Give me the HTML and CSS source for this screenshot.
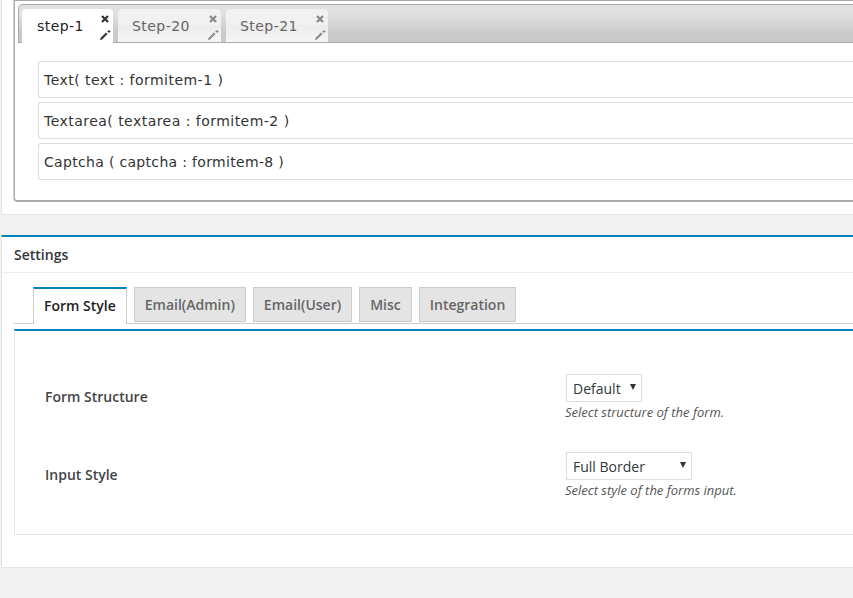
FILE: index.html
```html
<!DOCTYPE html>
<html lang="en">
<head>
<meta charset="utf-8">
<title>Form settings</title>
<link rel="stylesheet" href="styles.css">
</head>
<body>
<div class="page">
  <section class="card steps-card">
    <div class="widget">
      <div class="steps-bar">
        <div class="step active"><span class="step-label">step-1</span>
          <svg class="ico ico-x" viewBox="0 0 8 8"><path d="M1 1 7 7M7 1 1 7"/></svg>
          <svg class="ico ico-pen" viewBox="0 0 12 12"><path class="pen" d="M1 11 1.5 9 7 3.5 8.5 5 3 10.5Z"/><path class="pen" d="M9.5 1h1v1h1v1h-1v1h-1V3h-1V2h1z"/></svg>
        </div>
        <div class="step"><span class="step-label">Step-20</span>
          <svg class="ico ico-x" viewBox="0 0 8 8"><path d="M1 1 7 7M7 1 1 7"/></svg>
          <svg class="ico ico-pen" viewBox="0 0 12 12"><path class="pen" d="M1 11 1.5 9 7 3.5 8.5 5 3 10.5Z"/><path class="pen" d="M9.5 1h1v1h1v1h-1v1h-1V3h-1V2h1z"/></svg>
        </div>
        <div class="step"><span class="step-label">Step-21</span>
          <svg class="ico ico-x" viewBox="0 0 8 8"><path d="M1 1 7 7M7 1 1 7"/></svg>
          <svg class="ico ico-pen" viewBox="0 0 12 12"><path class="pen" d="M1 11 1.5 9 7 3.5 8.5 5 3 10.5Z"/><path class="pen" d="M9.5 1h1v1h1v1h-1v1h-1V3h-1V2h1z"/></svg>
        </div>
      </div>
      <div class="items">
        <div class="item">Text( text : formitem-1 )</div>
        <div class="item">Textarea( textarea : formitem-2 )</div>
        <div class="item item-tight">Captcha ( captcha : formitem-8 )</div>
      </div>
    </div>
  </section>

  <section class="card settings-card">
    <h2 class="settings-title">Settings</h2>
    <div class="settings-body">
      <nav class="tabs">
        <span class="tab active">Form Style</span>
        <span class="tab">Email(Admin)</span>
        <span class="tab">Email(User)</span>
        <span class="tab">Misc</span>
        <span class="tab">Integration</span>
      </nav>
      <div class="panel">
        <div class="row">
          <div class="row-label">Form Structure</div>
          <div class="row-field">
            <div class="select select-short">Default<i class="caret"></i></div>
            <p class="hint">Select structure of the form.</p>
          </div>
        </div>
        <div class="row">
          <div class="row-label">Input Style</div>
          <div class="row-field">
            <div class="select select-wide">Full Border<i class="caret"></i></div>
            <p class="hint">Select style of the forms input.</p>
          </div>
        </div>
      </div>
    </div>
  </section>
</div>
</body>
</html>
```
FILE: styles.css
```css
* { box-sizing: border-box; }
html, body { margin: 0; padding: 0; height: 598px; overflow: hidden; background: #f1f1f1; }
body { font-family: "Open Sans", sans-serif; color: #444; }
.page { width: 900px; padding-left: 1px; }

.card { background: #fff; border-left: 1px solid #e5e5e5; border-bottom: 1px solid #e5e5e5; }

.steps-card { height: 215px; padding: 0 0 0 12px; }
.widget { height: 202px; border: 1px solid #aaa; border-bottom-width: 2px; border-right: 0; border-radius: 0 0 0 4px; box-shadow: -1px 0 0 #d4d4d4; padding: 3px 0 0 3px; }
.steps-bar { display: flex; gap: 5px; height: 39px; padding: 4px 0 0 3px; border: 1px solid #aaa; border-width: 1px 0 1px 1px; border-radius: 5px 0 0 0; background: linear-gradient(#e2e2e2, #e0e0e0 25%, #cacaca 75%, #c9c9c9); }
.step { position: relative; width: 103px; height: 33px; background: linear-gradient(#f1f1f1 50%, #ececec 50%, #f5f5f5); border-radius: 4px 4px 0 0; font: 14px/35px "DejaVu Sans", sans-serif; letter-spacing: .45px; color: #666; padding-left: 14px; }
.step:nth-child(3) { width: 102px; }
.step.active { background: #fff; color: #222; height: 34px; width: 91px; padding-left: 15px; }
.ico { position: absolute; }
.ico-x { top: 6px; right: 4px; width: 8px; height: 8px; fill: none; stroke: #888; stroke-width: 2.2; }
.ico-pen { top: 20px; right: 2px; width: 12px; height: 12px; }
.pen { fill: #888; }
.step.active .ico-x { stroke: #333; }
.step.active .pen { fill: #333; }

.items { padding: 18px 0 0 20px; display: flex; flex-direction: column; gap: 4px; }
.item { height: 37px; border: 1px solid #ddd; border-right: 0; border-radius: 3px 0 0 3px; padding-left: 5px; font: 14px/36px "DejaVu Sans", sans-serif; letter-spacing: .47px; color: #333; }
.item-tight { letter-spacing: .32px; }

.settings-card { margin-top: 20px; height: 333px; border-top: 2px solid #0085ba; }
.settings-title { margin: 0; height: 36px; padding-left: 12px; font: 600 14px/35px "Open Sans", sans-serif; color: #32373c; border-bottom: 1px solid #eee; }
.settings-body { padding: 14px 0 0 12px; }
.tabs { display: flex; gap: 7px; height: 37px; padding-left: 19px; border-bottom: 1px solid #ccc; align-items: flex-start; }
.tab { height: 35px; padding: 0 10px; background: #e4e4e4; border: 1px solid #ccc; font: 600 14px/33px "Open Sans", sans-serif; color: #666; }
.tab.active { height: 37px; background: #fff; border-color: #ccc; border-top: 2px solid #0085ba; border-bottom: 0; color: #222; line-height: 33px; }
.panel { margin-top: 5px; height: 206px; border-top: 2px solid #0085ba; border-left: 1px solid #e5e5e5; border-bottom: 1px solid #e5e5e5; padding: 43px 0 0 30px; }
.row { display: flex; height: 78px; }
.row-label { width: 520px; font: 600 14px/20px "Open Sans", sans-serif; color: #444; padding-top: 13px; }
.row-field { flex: 1; }
.select { position: relative; height: 28px; border: 1px solid #ddd; font: 14px/28px "Open Sans", sans-serif; color: #32373c; padding-left: 6px; margin-left: 1px; background: #fff; }
.select-short { width: 76px; }
.select-wide { width: 126px; }
.caret { position: absolute; right: 5px; top: 9px; border: 3.5px solid transparent; border-top: 6px solid #333; border-bottom: 0; }
.hint { margin: 2px 0 0; font: italic 13px/17px "Open Sans", sans-serif; color: #555; }
```
